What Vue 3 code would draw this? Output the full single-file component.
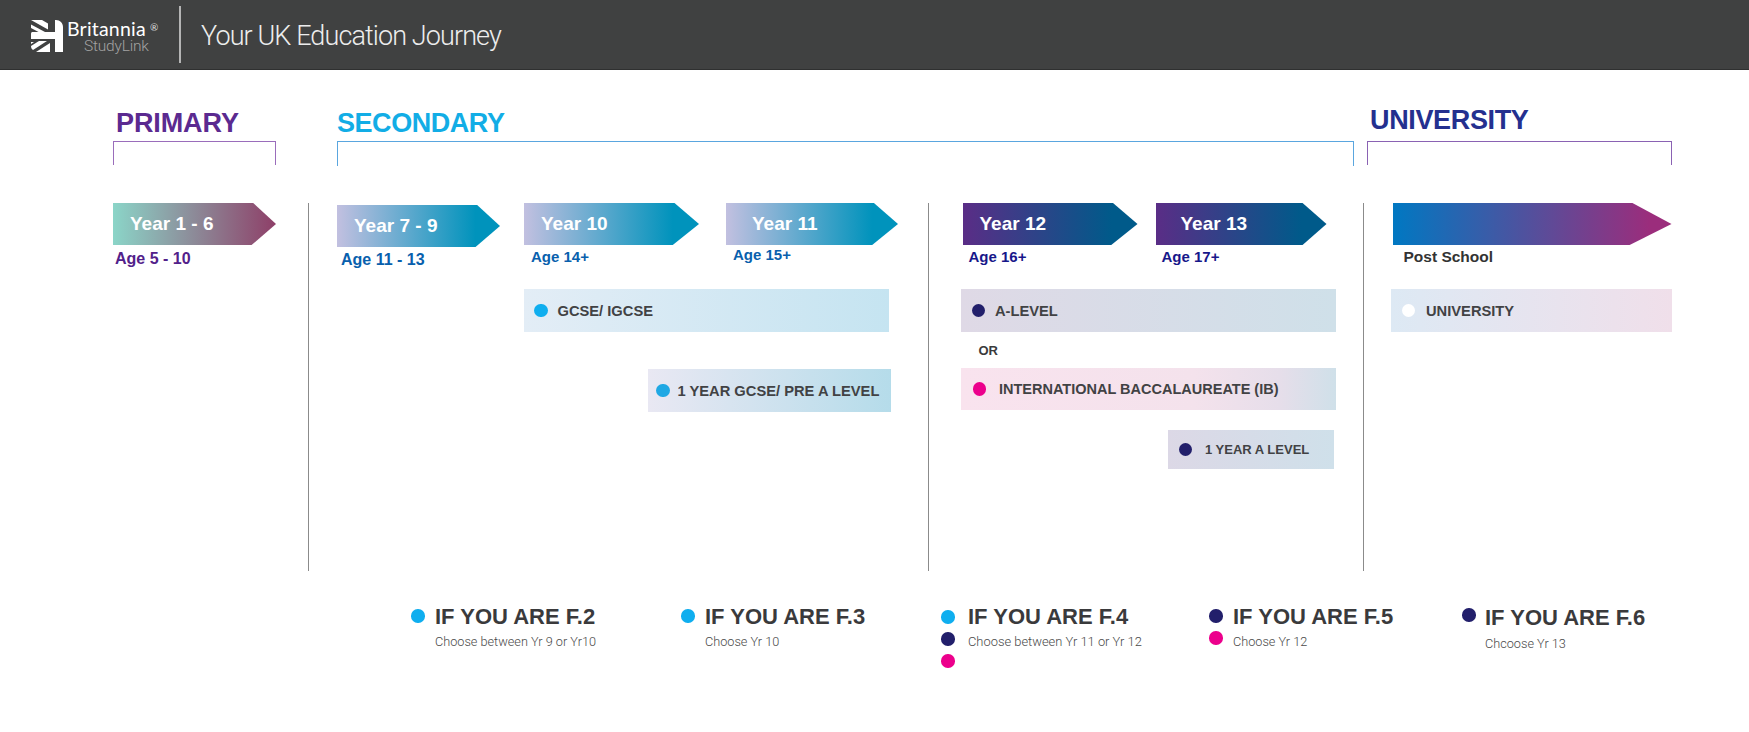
<script setup>
const secondarySteps = [
  { label: 'Year 7 - 9', age: 'Age 11 - 13', cls: 's79' },
  { label: 'Year 10', age: 'Age 14+', cls: 's10' },
  { label: 'Year 11', age: 'Age 15+', cls: 's11' }
]
const alevelSteps = [
  { label: 'Year 12', age: 'Age 16+', cls: 's12' },
  { label: 'Year 13', age: 'Age 17+', cls: 's13' }
]
const advice = [
  { title: 'IF YOU ARE F.2', sub: 'Choose between Yr 9 or Yr10', dots: ['sky'], cls: 'f2' },
  { title: 'IF YOU ARE F.3', sub: 'Choose Yr 10', dots: ['sky'], cls: 'f3' },
  { title: 'IF YOU ARE F.4', sub: 'Choose between Yr 11 or Yr 12', dots: ['sky', 'navy', 'pink'], cls: 'f4' },
  { title: 'IF YOU ARE F.5', sub: 'Choose Yr 12', dots: ['navy', 'pink'], cls: 'f5' },
  { title: 'IF YOU ARE F.6', sub: 'Chcoose Yr 13', dots: ['navy'], cls: 'f6' }
]
</script>

<template>
  <div class="page">
    <header class="bar">
      <svg class="logo" viewBox="0 0 32 32" width="32" height="32" aria-hidden="true">
        <path d="M0 0H11L17 3.5V9.5Z" fill="#fff" />
        <path d="M0 4.5 14 12H7.5L0 8Z" fill="#fff" />
        <path d="M20 0H25C29 0 32 3 32 7V32H24V19H0V14C0 13 .5 12 1 12H24V0Z" fill="#fff" />
        <path d="M0 22H3L0 24Z" fill="#fff" />
        <path d="M8 21H16L2 30C.8 29 0 28 0 26Z" fill="#fff" />
        <path d="M19 23V32H5Z" fill="#fff" />
      </svg>
      <div class="brand">
        <div class="brand-name">Britannia<span class="reg">®</span></div>
        <div class="brand-sub">StudyLink</div>
      </div>
      <div class="bar-rule"></div>
      <div class="bar-title">Your UK Education Journey</div>
    </header>

    <section class="stages">
      <div class="stage stage-primary">
        <h2>PRIMARY</h2>
        <div class="bracket"></div>
      </div>
      <div class="stage stage-secondary">
        <h2>SECONDARY</h2>
        <div class="bracket"></div>
      </div>
      <div class="stage stage-university">
        <h2>UNIVERSITY</h2>
        <div class="bracket"></div>
      </div>
    </section>

    <section class="timeline">
      <div class="col col-primary">
        <div class="steps">
          <div class="step s16">
            <div class="arrow">Year 1 - 6</div>
            <div class="age">Age 5 - 10</div>
          </div>
        </div>
      </div>

      <div class="col col-secondary">
        <div class="steps">
          <div v-for="s in secondarySteps" :key="s.cls" class="step" :class="s.cls">
            <div class="arrow">{{ s.label }}</div>
            <div class="age">{{ s.age }}</div>
          </div>
        </div>
        <div class="course c-gcse"><i class="dot sky"></i>GCSE/ IGCSE</div>
        <div class="course c-pre"><i class="dot sky2"></i>1 YEAR GCSE/ PRE A LEVEL</div>
      </div>

      <div class="col col-alevel">
        <div class="steps">
          <div v-for="s in alevelSteps" :key="s.cls" class="step" :class="s.cls">
            <div class="arrow">{{ s.label }}</div>
            <div class="age">{{ s.age }}</div>
          </div>
        </div>
        <div class="course c-alevel"><i class="dot navy"></i>A-LEVEL</div>
        <div class="or">OR</div>
        <div class="course c-ib"><i class="dot pink"></i>INTERNATIONAL BACCALAUREATE (IB)</div>
        <div class="course c-one"><i class="dot navy"></i>1 YEAR A LEVEL</div>
      </div>

      <div class="col col-university">
        <div class="steps">
          <div class="step suni">
            <div class="arrow"></div>
            <div class="age">Post School</div>
          </div>
        </div>
        <div class="course c-uni"><i class="dot white"></i>UNIVERSITY</div>
      </div>
    </section>

    <section class="advice">
      <div v-for="a in advice" :key="a.cls" class="tip" :class="a.cls">
        <div class="tip-dots">
          <i v-for="d in a.dots" :key="d" class="dot" :class="d"></i>
        </div>
        <div class="tip-text">
          <div class="tip-title">{{ a.title }}</div>
          <div class="tip-sub">{{ a.sub }}</div>
        </div>
      </div>
    </section>
  </div>
</template>

<style>
html, body { margin: 0; background: #fff; }
</style>

<style scoped>
.page {
  width: 1749px;
  height: 732px;
  overflow: hidden;
  background: #fff;
  font-family: "Liberation Sans", Arial, sans-serif;
  color: #3a3a3c;
}

/* Header */
.bar {
  background: #404141;
  border-bottom: 1px solid #2f3030;
  box-sizing: border-box;
  height: 70px;
  display: flex;
  align-items: center;
  padding-left: 31px;
}
.logo { margin-top: 2px; flex: none; }
.brand { width: 105px; margin-left: 4px; flex: none; margin-top: 3px; }
.brand-name {
  font: 400 19.5px/19px Lato, sans-serif;
  color: #fff;
  position: relative;
  letter-spacing: .2px;
}
.reg { position: absolute; left: 83px; top: -1px; font-size: 10px; color: #ddd; }
.brand-sub {
  font: 300 15.5px/16px Roboto, sans-serif;
  color: #a3a3a3;
  margin-left: 17px;
  letter-spacing: -.2px;
}
.bar-rule { width: 2px; height: 57px; background: #b5b5b5; margin-left: 7px; flex: none; }
.bar-title {
  margin: 2px 0 0 20px;
  font: 300 27px/32px Roboto, sans-serif;
  color: #ededed;
  letter-spacing: -.9px;
}

/* Stage brackets */
.stages {
  display: flex;
  padding: 38px 0 0 113px;
  height: 133px;
  box-sizing: border-box;
}
.stage { position: relative; }
.stage h2 {
  margin: 0 0 2px;
  font-size: 27px;
  line-height: 31px;
  font-weight: 700;
  letter-spacing: -.1px;
}
.bracket {
  height: 24px;
  border: 1.5px solid;
  border-bottom: 0;
  box-sizing: border-box;
}
.stage-primary { width: 163px; margin-right: 61px; color: #5b2a90; }
.stage-primary h2 { margin-left: 3px; }
.stage-primary .bracket { border-color: #9a6dbb; }
.stage-secondary { width: 1017px; margin-right: 13px; color: #12ade6; }
.stage-secondary h2 { letter-spacing: -.45px; }
.stage-secondary .bracket { border-color: #5aa6df; height: 25px; }
.stage-university { width: 305px; color: #24308f; margin-top: -3px; }
.stage-university h2 { margin: 0 0 5px 3px; letter-spacing: -.35px; }
.stage-university .bracket { border-color: #8a62b3; }

/* Timeline */
.timeline {
  display: flex;
  padding-left: 113px;
  height: 368px;
}
.col { box-sizing: border-box; flex: none; position: relative; }
.col-primary { width: 195px; }
.col-secondary { width: 619.5px; padding-left: 28px; border-left: 1.5px solid #8b8b8b; }
.col-alevel { width: 435px; padding-left: 32px; border-left: 1.5px solid #8b8b8b; }
.col-university { width: 309px; padding-left: 27px; border-left: 1.5px solid #8b8b8b; }

.steps { display: flex; height: 86px; }
.step { flex: none; display: flex; flex-direction: column; }
.arrow {
  height: 42px;
  flex: none;
  box-sizing: border-box;
  color: #fff;
  font-size: 19px;
  line-height: 42px;
  font-weight: 700;
  white-space: nowrap;
}
.age {
  font-size: 15px;
  font-weight: 700;
  line-height: 20px;
  white-space: nowrap;
}

.s16 { width: 163px; }
.s16 .arrow {
  padding-left: 17px;
  background: linear-gradient(90deg, #8bd5c8 0%, #8e3f68 100%);
  clip-path: polygon(0 0, 86% 0, 100% 50%, 85% 100%, 0 100%);
}
.s16 .age { color: #52218a; margin: 4px 0 0 2px; font-size: 16px; }

.s79, .s10, .s11 { color: #0860ad; }
.s79 .arrow, .s10 .arrow, .s11 .arrow {
  background: linear-gradient(90deg, #c2c0e0 0%, #0093bc 85%);
}
.s79 { width: 163px; margin: 2px 24px 0 0; }
.s79 .arrow { padding-left: 17px; clip-path: polygon(0 0, 86% 0, 100% 50%, 85% 100%, 0 100%); }
.s79 .age { margin: 3px 0 0 4px; font-size: 16px; }
.s10 { width: 175px; margin-right: 27px; }
.s10 .arrow { padding-left: 17px; clip-path: polygon(0 0, 86% 0, 100% 50%, 85% 100%, 0 100%); }
.s10 .age { margin: 2px 0 0 7px; }
.s11 { width: 172px; }
.s11 .arrow { padding-left: 26px; clip-path: polygon(0 0, 86% 0, 100% 50%, 85% 100%, 0 100%); }
.s11 .age { margin: 0 0 0 7px; }

.s12, .s13 { color: #17178a; }
.s12 .arrow, .s13 .arrow {
  background: linear-gradient(90deg, #5a2d86 0%, #005a8a 85%);
}
.s12 { width: 175px; margin: 0 18px 0 2px; }
.s12 .arrow { padding-left: 17px; clip-path: polygon(0 0, 86% 0, 100% 50%, 85% 100%, 0 100%); }
.s12 .age { margin: 2px 0 0 6px; }
.s13 { width: 171px; }
.s13 .arrow { padding-left: 25px; clip-path: polygon(0 0, 86% 0, 100% 50%, 86% 100%, 0 100%); }
.s13 .age { margin: 2px 0 0 6px; }

.suni { width: 279px; }
.suni .arrow {
  background: linear-gradient(90deg, #0078c2 0%, #9b2d7c 92%);
  clip-path: polygon(0 0, 86% 0, 100% 50%, 85% 100%, 0 100%);
}
.suni .age { color: #333; font-size: 15.5px; margin: 2px 0 0 11px; }

.course {
  display: flex;
  align-items: center;
  box-sizing: border-box;
  height: 43px;
  font-size: 14.7px;
  font-weight: 700;
  white-space: nowrap;
  color: #414244;
}
.dot {
  display: block;
  flex: none;
  width: 13.5px;
  height: 13.5px;
  border-radius: 50%;
}
.sky { background: #0faeef; }
.sky2 { background: #1fa8e4; }
.navy { background: #221f6b; }
.pink { background: #ec008c; }
.white { background: #fff; }

.c-gcse {
  width: 365px;
  margin-left: 187px;
  padding-left: 10px;
  background: linear-gradient(90deg, #e3edf6, #c5e4f1);
}
.c-gcse .dot { margin-right: 10px; }
.c-pre {
  width: 243px;
  margin: 37px 0 0 311px;
  padding-left: 8px;
  background: linear-gradient(90deg, #e9e8f3, #b5dcea);
}
.c-pre .dot { margin-right: 8px; }

.c-alevel {
  width: 375px;
  background: linear-gradient(90deg, #dfd9e6, #cfe0e9);
  padding-left: 11px;
}
.c-alevel .dot { margin-right: 10px; }
.or {
  height: 36px;
  line-height: 38px;
  margin-left: 18px;
  font-size: 13px;
  font-weight: 700;
  color: #3a3a3c;
}
.c-ib {
  width: 375px;
  height: 42px;
  padding-left: 12px;
  font-size: 14.5px;
  background: linear-gradient(90deg, #f9e3ee 0%, #f4e2ec 62%, #e6deea 85%, #cfe0e9 100%);
}
.c-ib .dot { margin-right: 13px; }
.c-one {
  width: 166px;
  height: 39px;
  margin: 20px 0 0 207px;
  padding-left: 11px;
  font-size: 13px;
  background: linear-gradient(90deg, #dcd8e6, #cfe0ea);
}
.c-one .dot { margin-right: 13px; }

.col-university .steps { margin-left: 2px; }
.c-uni {
  width: 281px;
  padding-left: 11px;
  background: linear-gradient(90deg, #dde9f4, #f0dfea);
}
.c-uni .dot { margin-right: 11px; }

/* Advice */
.advice {
  display: flex;
  padding: 33px 0 0 411px;
}
.tip { flex: none; display: flex; }
.tip-dots { width: 24px; flex: none; display: flex; flex-direction: column; gap: 8.5px; padding-top: 5px; box-sizing: border-box; }
.tip-title { font-size: 22px; line-height: 26px; font-weight: 700; color: #3a3a3c; white-space: nowrap; }
.tip-sub { font: 300 12.7px/16px Roboto, sans-serif; color: #4a4a4a; margin-top: 4px; white-space: nowrap; }
.f2 { width: 270px; }
.f3 { width: 260px; }
.f4 { width: 268px; }
.f4 .tip-dots { width: 27px; padding-top: 6px; }
.f4 .tip-sub { font-size: 12.9px; }
.f5 { width: 253px; }
.f6 { width: 200px; margin-top: 1px; }
.f6 .tip-dots { width: 23px; padding-top: 3px; }
.f6 .tip-sub { margin-top: 5px; }
</style>
